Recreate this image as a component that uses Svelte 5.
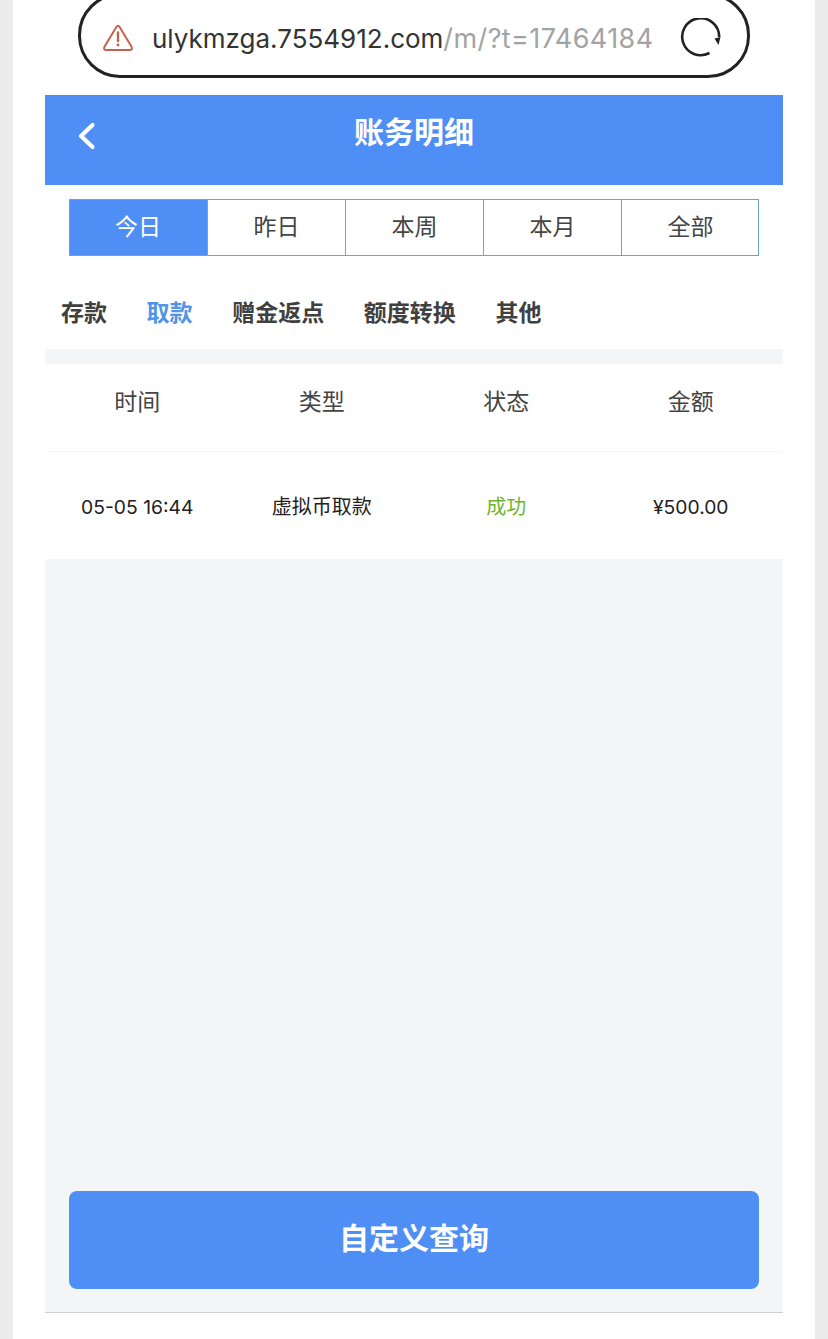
<script>
	const ranges = ['今日', '昨日', '本周', '本月', '全部'];
	const kinds = ['存款', '取款', '赠金返点', '额度转换', '其他'];
	const columns = ['时间', '类型', '状态', '金额'];
	let range = 0;
	let kind = 1;
</script>

<div class="page">
	<div class="urlbar">
		<svg class="warn" width="30" height="27" viewBox="0 0 30 27" fill="none" stroke="#c4614f" stroke-width="2">
			<path d="M13.4 3 Q15 0.6 16.6 3 L28.4 22.6 Q30 26 26.4 26 H3.6 Q0 26 1.6 22.6 Z" stroke-linejoin="round" />
			<path d="M15 8.5 V17" stroke-linecap="round" stroke-width="2.4" />
			<circle cx="15" cy="21" r="1.4" fill="#c4614f" stroke="none" />
		</svg>
		<div class="address"><span class="host">ulykmzga.7554912.com</span><span class="path">/m/?t=17464184</span></div>
		<svg class="reload" width="42" height="42" viewBox="0 0 42 42" fill="none">
			<path d="M29.5 35 A18.5 18.5 0 1 1 39.2 19" stroke="#222" stroke-width="2.6" />
			<path d="M34.5 20.5 L40.5 19 L38.5 27 Z" fill="#222" />
		</svg>
	</div>

	<header class="title">
		<svg class="back" width="20" height="30" viewBox="0 0 20 30" fill="none">
			<path d="M15.5 4 L4 15 L15.5 26" stroke="#fff" stroke-width="4.2" stroke-linecap="round" stroke-linejoin="round" />
		</svg>
		<h1>账务明细</h1>
	</header>

	<div class="ranges">
		{#each ranges as label, i}
			<button class="range" class:active={i === range}>{label}</button>
		{/each}
	</div>

	<div class="kinds">
		{#each kinds as label, i}
			<span class="kind" class:active={i === kind}>{label}</span>
		{/each}
	</div>

	<div class="body">
		<div class="table">
			<div class="row head">
				{#each columns as col}
					<div>{col}</div>
				{/each}
			</div>
			<div class="row item">
				<div class="num">05-05 16:44</div>
				<div>虚拟币取款</div>
				<div class="ok">成功</div>
				<div class="num">¥500.00</div>
			</div>
		</div>
		<div class="foot">
			<button class="query">自定义查询</button>
		</div>
	</div>
</div>

<style>
	:global(body) {
		margin: 0;
		background: #ececec;
		font-family: 'Noto Sans CJK SC', 'Noto Sans', sans-serif;
	}
	.page {
		box-sizing: border-box;
		height: 1339px;
		margin: 0 13px;
		padding: 0 32px;
		background: #fff;
		overflow: hidden;
		display: flex;
		flex-direction: column;
	}
	.urlbar {
		box-sizing: border-box;
		height: 85px;
		margin: -7px 33px 0;
		padding: 6px 25px 0 22px;
		border: 3px solid #222;
		border-radius: 42px;
		display: flex;
		align-items: center;
		flex-shrink: 0;
	}
	.warn {
		flex-shrink: 0;
		margin-right: 19px;
		margin-top: -3px;
	}
	.address {
		flex: 1;
		font-family: Inter, 'Noto Sans', sans-serif;
		white-space: nowrap;
		overflow: hidden;
	}
	.host {
		color: #333;
		font-size: 26px;
	}
	.path {
		color: #a3a3a3;
		font-size: 27px;
		letter-spacing: 0.4px;
	}
	.reload {
		flex-shrink: 0;
	}
	.title {
		height: 90px;
		margin-top: 17px;
		background: #4f8ff5;
		display: flex;
		align-items: center;
		justify-content: center;
		position: relative;
		flex-shrink: 0;
	}
	.title h1 {
		margin: 0 0 20px;
		font-size: 30px;
		font-weight: 700;
		color: #fff;
	}
	.back {
		position: absolute;
		left: 32px;
		top: 26px;
	}
	.ranges {
		display: grid;
		grid-template-columns: repeat(5, 1fr);
		height: 57px;
		margin: 14px 24px 0;
		outline: 1px solid #6fa3cf;
		outline-offset: -1px;
		flex-shrink: 0;
	}
	.range {
		border: 0;
		border-left: 1px solid #6fa3cf;
		padding: 0 0 6px;
		background: #fff;
		font-family: inherit;
		font-size: 23px;
		color: #444;
	}
	.range:first-child {
		border-left: 0;
	}
	.range.active {
		background: #4f8ff5;
		color: #fff;
	}
	.kinds {
		box-sizing: border-box;
		height: 93px;
		padding: 16px 0 0 16px;
		display: flex;
		align-items: center;
		gap: 39.6px;
		flex-shrink: 0;
	}
	.kind {
		font-size: 23px;
		font-weight: 700;
		color: #404040;
	}
	.kind.active {
		color: #4f94e8;
	}
	.body {
		flex: 0 0 964px;
		background: #f4f5f7;
		padding-top: 15px;
		box-sizing: border-box;
		border-bottom: 1px solid #cfd1d6;
		display: flex;
		flex-direction: column;
	}
	.table {
		background: #fff;
	}
	.row {
		display: grid;
		grid-template-columns: repeat(4, 1fr);
		align-items: center;
		text-align: center;
	}
	.head {
		height: 88px;
		padding-bottom: 16px;
		font-size: 23px;
		color: #444;
		border-bottom: 1px solid #f6f6f7;
		box-sizing: border-box;
	}
	.item {
		height: 107px;
		font-size: 20px;
		color: #222;
	}
	.num {
		padding-top: 2px;
		font-family: Inter, 'Noto Sans', sans-serif;
		font-size: 19.3px;
	}
	.ok {
		color: #6cb62d;
	}
	.foot {
		margin-top: auto;
		padding: 0 24px 23px;
	}
	.query {
		display: block;
		width: 100%;
		height: 98px;
		padding: 0 0 8px;
		border: 0;
		border-radius: 8px;
		background: #4f8ff5;
		color: #fff;
		font-family: inherit;
		font-size: 30px;
		font-weight: 700;
	}
</style>
